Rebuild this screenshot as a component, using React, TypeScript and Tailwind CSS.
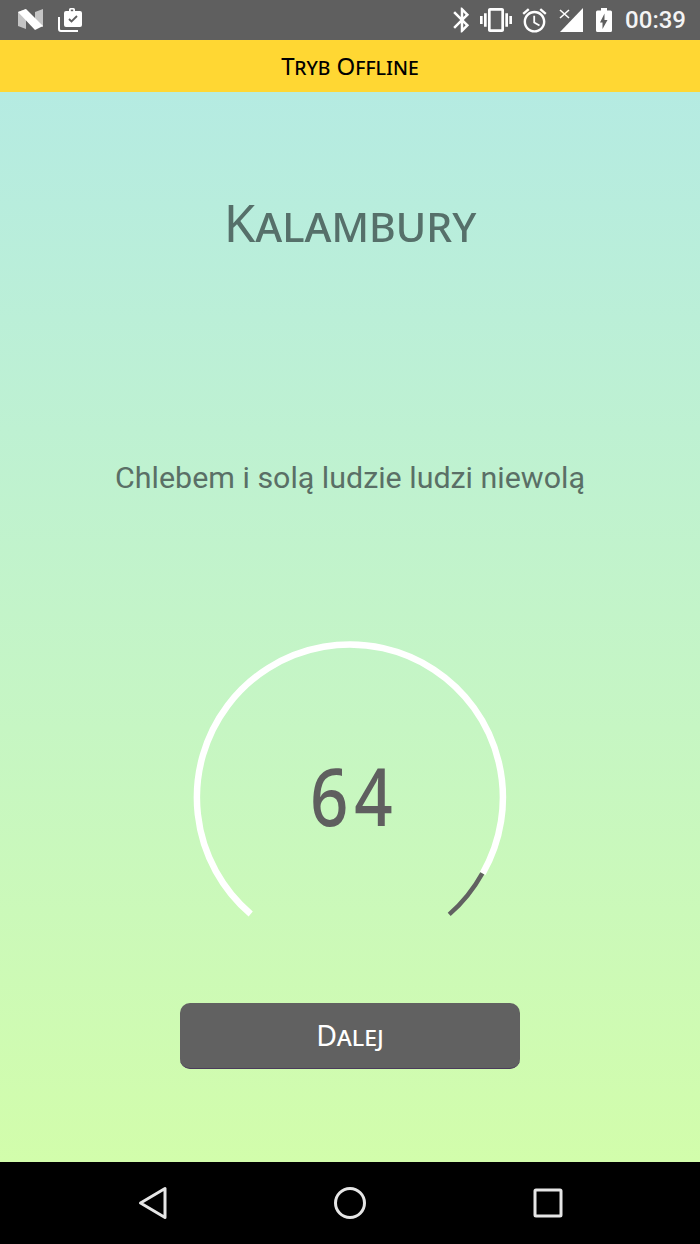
import { ReactNode } from 'react';

const MaterialIcon = ({ size, className, children }: { size: number; className?: string; children: ReactNode }) => (
  <svg width={size} height={size} viewBox="0 0 24 24" fill="currentColor" className={className}>
    {children}
  </svg>
);

function StatusBar() {
  return (
    <div className="flex h-[40px] items-center bg-[#5f5f5f] pl-[17px] pr-[14px] text-white">
      {/* N logo */}
      <svg width="27" height="24" viewBox="0 0 27 24">
        <path d="M1 4 L9 1 V21 L1 18Z" fill="#c4c4c4" />
        <path d="M18 4 L26 1 V19 L18 17Z" fill="#c4c4c4" />
        <path d="M1 4 L9 1 L26 18 L18 22Z" fill="#ffffff" />
      </svg>
      {/* briefcase with check */}
      <svg width="26" height="26" viewBox="0 0 26 26" className="ml-[14px]">
        <path d="M1 10 V22 a2 2 0 0 0 2 2 H20" fill="none" stroke="#fff" strokeWidth="2" />
        <path d="M8 4 h3 V2.5 a1.5 1.5 0 0 1 1.5-1.5 h3 a1.5 1.5 0 0 1 1.5 1.5 V4 h5 a2 2 0 0 1 2 2 V18 a2 2 0 0 1-2 2 H8 a2 2 0 0 1-2-2 V6 a2 2 0 0 1 2-2Z" fill="#fff" />
        <path d="M11 12 l2.5 2.5 L19 9" fill="none" stroke="#5f5f5f" strokeWidth="1.8" />
        <rect x="12.8" y="2.6" width="2.4" height="1.6" fill="#5f5f5f" />
      </svg>
      <div className="ml-auto flex items-center">
        <MaterialIcon size={30}>
          <path d="M17.71 7.71L12 2h-1v7.59L6.41 5 5 6.41 10.59 12 5 17.59 6.41 19 11 14.41V22h1l5.71-5.71-4.3-4.29 4.3-4.29zM13 5.83l1.88 1.88L13 9.59V5.83zm1.88 10.46L13 18.17v-3.76l1.88 1.88z" />
        </MaterialIcon>
        <MaterialIcon size={32} className="ml-[3px]">
          <path d="M0 15h2V9H0v6zm3 2h2V7H3v10zm19-8v6h2V9h-2zm-3 8h2V7h-2v10zM16.5 3h-9C6.67 3 6 3.67 6 4.5v15c0 .83.67 1.5 1.5 1.5h9c.83 0 1.5-.67 1.5-1.5v-15c0-.83-.67-1.5-1.5-1.5zM16 19H8V5h8v14z" />
        </MaterialIcon>
        <MaterialIcon size={29} className="ml-[8px]">
          <path d="M22 5.72l-4.6-3.86-1.29 1.53 4.6 3.86L22 5.72zM7.88 3.39L6.6 1.86 2 5.71l1.29 1.53 4.59-3.85zM12.5 8H11v6l4.75 2.85.75-1.23-4-2.37V8zM12 4c-4.97 0-9 4.03-9 9s4.03 9 9 9 9-4.03 9-9-4.03-9-9-9zm0 16c-3.87 0-7-3.13-7-7s3.13-7 7-7 7 3.13 7 7-3.13 7-7 7z" />
        </MaterialIcon>
        {/* signal, no sim */}
        <svg width="25" height="26" viewBox="0 0 25 26" className="ml-[10px]">
          <path d="M24 1 V25 H1Z" fill="#fff" />
          <path d="M1 2 L11 12 M11 2 L1 12" stroke="#5f5f5f" strokeWidth="5" />
          <path d="M1 3 L10 11 M10 3 L1 11" stroke="#fff" strokeWidth="1.6" />
        </svg>
        {/* battery charging */}
        <svg width="16" height="24" viewBox="0 0 16 24" className="ml-[12px]">
          <path d="M1.5 2.5 H5 V0 H11 V2.5 H14.5 A1.5 1.5 0 0 1 16 4 V22.5 A1.5 1.5 0 0 1 14.5 24 H1.5 A1.5 1.5 0 0 1 0 22.5 V4 A1.5 1.5 0 0 1 1.5 2.5Z M6.5 21 L11.5 12 H8.5 V5.5 L4 14.5 H6.5Z" fill="#fff" fillRule="evenodd" />
        </svg>
        <span className="ml-[13px] [font-family:Roboto,sans-serif] text-[24px] font-medium leading-none text-[#f4f4f4]">00:39</span>
      </div>
    </div>
  );
}

function Gauge() {
  return (
    <div className="relative h-[290px] w-[320px]">
      <svg width="320" height="290" viewBox="0 0 320 290" fill="none">
        <path d="M60.7 274 A153 153 0 1 1 292.7 233.5" stroke="#ffffff" strokeWidth="6.5" />
        <path d="M292.3 233.3 A153 153 0 0 1 259.2 274.4" stroke="#616161" strokeWidth="4.5" />
      </svg>
      <div className="absolute left-0 right-0 top-[106px] scale-x-[0.84] pl-[10px] text-center [font-family:'Noto_Sans',sans-serif] text-[80px] font-medium leading-[98px] tracking-[7px] text-[#5f5f5f]">
        64
      </div>
    </div>
  );
}

export default function App() {
  return (
    <div className="flex h-[1244px] w-[700px] flex-col overflow-hidden">
      <StatusBar />
      <div className="flex h-[52px] items-center justify-center bg-[#ffd733] [font-family:'Noto_Sans',sans-serif] text-[24px] text-black [font-variant:small-caps]">
        Tryb Offline
      </div>

      <main className="flex flex-1 flex-col items-center bg-gradient-to-b from-[#b5ebe2] to-[#d2fdab]">
        <h1 className="mt-[97px] h-[66px] [font-family:'Noto_Sans',sans-serif] text-[51px] leading-[66px] text-[#56706a] [font-variant:small-caps]">
          Kalambury
        </h1>
        <p className="mt-[206px] h-[34px] [font-family:Roboto,sans-serif] text-[30.4px] leading-[34px] text-[#5a6f66]">
          Chlebem i solą ludzie ludzi niewolą
        </p>
        <div className="mt-[145px]">
          <Gauge />
        </div>
        <button className="mt-[73px] flex h-[66px] w-[340px] items-center justify-center rounded-[10px] border-b border-[#4b3b5c] bg-[#616161] [font-family:'Noto_Sans',sans-serif] text-[28.5px] text-white [font-variant:small-caps]">
          Dalej
        </button>
      </main>

      <nav className="relative flex h-[82px] items-center justify-between bg-black pl-[138px] pr-[137px] text-[#e6e6e6]">
        <svg width="30" height="34" viewBox="0 0 30 34" fill="none" stroke="currentColor" strokeWidth="3" strokeLinejoin="round">
          <path d="M2.5 17 L27 2.5 V31.5Z" />
        </svg>
        <svg width="34" height="34" viewBox="0 0 34 34" fill="none" stroke="currentColor" strokeWidth="3" className="-ml-[1px]">
          <circle cx="17" cy="17" r="14.5" />
        </svg>
        <svg width="30" height="30" viewBox="0 0 30 30" fill="none" stroke="currentColor" strokeWidth="3" strokeLinejoin="round">
          <rect x="2" y="2" width="26" height="26" rx="1" />
        </svg>
      </nav>
    </div>
  );
}
